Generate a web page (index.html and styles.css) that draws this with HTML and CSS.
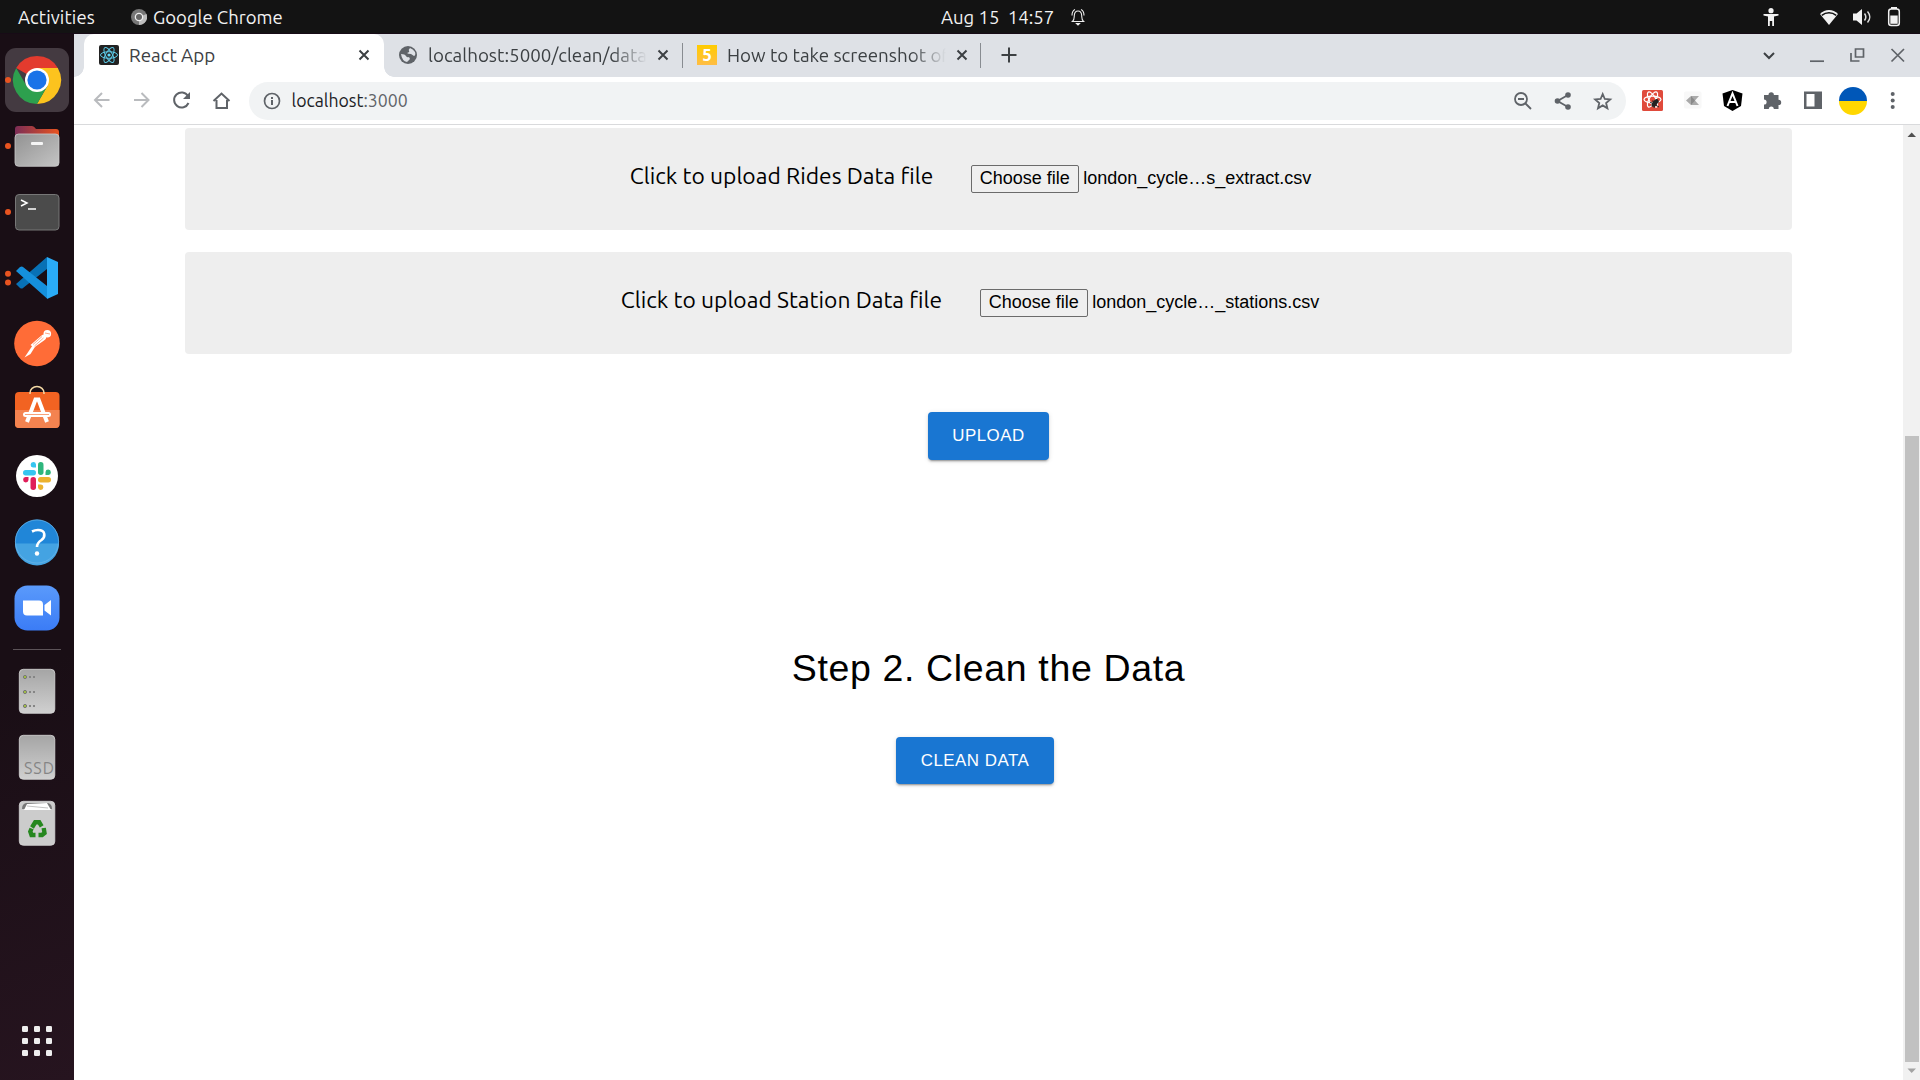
FILE: index.html
```html
<!DOCTYPE html>
<html lang="en">
<head>
<meta charset="utf-8">
<title>React App</title>
<link rel="stylesheet" href="styles.css">
</head>
<body>
<header class="topbar">
  <div class="topbar-left">
    <span class="activities">Activities</span>
    <svg class="app-icon" width="16" height="16" viewBox="0 0 16 16"><circle cx="8" cy="8" r="8" fill="#777"/><path d="M8 8 15.5 5A8 8 0 0 1 8 16Z" fill="#bdbdbd"/><circle cx="8" cy="8" r="4.3" fill="#eee"/><circle cx="8" cy="8" r="3" fill="#666"/></svg>
    <span class="app-name">Google Chrome</span>
  </div>
  <div class="clock"><span class="time">Aug 15&nbsp; 14:57</span>
    <svg width="16" height="18" viewBox="0 0 16 18" fill="none" stroke="#eee" stroke-width="1.1"><path d="M2.500 13.500C4.500 12 4.100 9.500 4.300 7.500 4.500 4.500 6 3 8 3s3.500 1.500 3.700 4.500c.2 2-.2 4.500 1.800 6ZM2 7.500C2 4.500 3 2.500 5 1.500M14 7.500C14 4.500 13 2.500 11 1.500"/><path d="M6.500 15.500h3l-1.500 1.500Z" fill="#eee"/></svg>
  </div>
  <div class="status">
    <svg width="16" height="18" viewBox="0 0 16 18" fill="#f2f2f2"><circle cx="8" cy="2.700" r="2.600"/><path d="M.5 6h15v1.600L11 8.500V18H9.200v-5H6.800v5H5V8.500L.5 7.600Z"/></svg>
    <svg class="wifi" width="20" height="17" viewBox="0 0 20 17"><path d="M10 16 1 5C6-.2 14-.2 19 5Z" fill="#f2f2f2"/><path d="M2.800 6.300c4.300-3.500 10.100-3.500 14.400 0" fill="none" stroke="#131313" stroke-width="1.500"/></svg>
    <svg class="volume" width="18" height="18" viewBox="0 0 18 18"><path d="M0 5.500h3.500L9 1v16l-5.500-4.500H0Z" fill="#f2f2f2"/><path d="M11.500 5.500c1.500 2 1.500 5 0 7M14.500 3.500c3 3.300 3 7.700 0 11" fill="none" stroke="#ddd" stroke-width="1.500"/></svg>
    <svg class="battery" width="14" height="20" viewBox="0 0 14 20"><path d="M4 0h6v2H4Z" fill="#f2f2f2"/><rect x="1.700" y="2" width="10.600" height="16.500" rx="2.500" fill="none" stroke="#f2f2f2" stroke-width="1.500"/><path d="M3.300 8.500h7.400v8.300H3.300Z" fill="#f2f2f2"/></svg>
  </div>
</header>
<div class="desktop">
<nav class="dock">
  <svg class="slot" viewBox="0 47 74 66"><rect x="5" y="48" width="64" height="64" rx="11" fill="#443a41"/><circle cx="8" cy="80" r="3" fill="#e95420"/><path d="M37 80 16.200 68A24 24 0 0 1 57.800 68Z" fill="#e33b2e"/><path d="M37 68H57.800A24 24 0 0 1 37 104L47.400 86Z" fill="#fcc31e"/><path d="M26.600 86 16.200 68A24 24 0 0 0 37 104L47.400 86 37 80Z" fill="#2da04e"/><circle cx="37" cy="80" r="12" fill="#fff"/><circle cx="37" cy="80" r="9.600" fill="#1a73e8"/></svg>
  <svg class="slot" viewBox="0 113 74 66"><defs><linearGradient id="folder"><stop stop-color="#7b2d56"/><stop offset="1" stop-color="#e95420"/></linearGradient><linearGradient id="steel" x2="1" y2="1"><stop stop-color="#929292"/><stop offset="1" stop-color="#c4c4c4"/></linearGradient></defs><circle cx="8" cy="146" r="3" fill="#e95420"/><path d="M15 129q0-3 3-3h14q2 0 4 3h20q3 0 3 3v12H15Z" fill="url(#folder)"/><rect x="15" y="134" width="44" height="32.300" rx="3.500" fill="url(#steel)" stroke="#ccc" stroke-width=".8"/><rect x="31" y="142" width="12" height="3" rx="1" fill="#f5f5f5"/></svg>
  <svg class="slot" viewBox="0 179 74 66"><circle cx="8" cy="212" r="3" fill="#e95420"/><rect x="15.500" y="194.500" width="43.500" height="35.500" rx="3.500" fill="#4b4b4b" stroke="#777"/><path d="m21 200 6 3-6 3M28 209h8" fill="none" stroke="#fff" stroke-width="1.500"/></svg>
  <svg class="slot" viewBox="0 245 74 66"><circle cx="8" cy="273.700" r="3" fill="#e95420"/><circle cx="8" cy="282.500" r="3" fill="#e95420"/><path d="m16 284 4 4q2 1 3 0L47 269V257Z" fill="#0871b5"/><path d="m16 271 4-4q2-1 3 0l24 19v12.500Z" fill="#1590dc"/><path d="m47 257 11 5v32l-11 5Z" fill="#2aabf6"/></svg>
  <svg class="slot" viewBox="0 311 74 66"><circle cx="37" cy="343.500" r="22.800" fill="#ff6c37"/><circle cx="47.300" cy="333.700" r="3.800" fill="#fff"/><path d="m30.500 345 11-9.500q3-2 4.500.5 1 2.500-2 4.500L34 347.500Z" fill="#fff"/><path d="m35.500 346-5 8-6 3.500 4-6 4-6Z" fill="#fff"/><path d="m33 344.500 9-8M34.500 346l9-8M45 333l5 1" stroke="#ff6c37" stroke-width=".6"/></svg>
  <svg class="slot" viewBox="0 377 74 66"><rect x="15" y="392" width="44.500" height="36" rx="4" fill="#f26322"/><path d="M15 410h44.500v14q0 4-4 4H19q-4 0-4-4Z" fill="#f48350"/><path d="M30 394v-1a7 6.500 0 0 1 14 0v1" fill="none" stroke="#f4d9a5" stroke-width="1.500"/><path d="M27 422 35.500 399.500h3L47 422" fill="none" stroke="#fff" stroke-width="4"/><rect x="23" y="412" width="28" height="5" rx="2.500" fill="#fff"/><path d="M25 414.500h24" stroke="#f26322" stroke-width=".6"/></svg>
  <svg class="slot" viewBox="0 443 74 66"><circle cx="37" cy="476" r="21" fill="#fff"/><g fill="#36c5f0"><rect x="23" y="470" width="13" height="5.500" rx="2.700"/><path d="M36 467.500h-3a2.700 2.700 0 1 1 3-3Z"/></g><g fill="#2eb67d"><rect x="38" y="462" width="5.500" height="13" rx="2.700"/><path d="M45.500 475v-3a2.700 2.700 0 1 1 3 3Z"/></g><g fill="#ecb22e"><rect x="38" y="477" width="13" height="5.500" rx="2.700"/><path d="M38 484.500h3a2.700 2.700 0 1 1-3 3Z"/></g><g fill="#e01e5a"><rect x="30.500" y="477" width="5.500" height="13" rx="2.700"/><path d="M28.500 477v3a2.700 2.700 0 1 1-3-3Z"/></g></svg>
  <svg class="slot" viewBox="0 509.500 74 66"><circle cx="37" cy="542" r="22" fill="#2086d8"/><path d="M15 544h44a22 22 0 0 1-44 0Z" fill="#44a3e2"/><circle cx="37" cy="542" r="21.600" fill="none" stroke="#6db6e8" stroke-width=".7"/><path d="M32 532q3-1.500 6-1.500c8 0 7.500 7 3.500 10-3 2-4.500 3.500-4.500 7" fill="none" stroke="#fff" stroke-width="2.600"/><circle cx="37" cy="554" r="2.200" fill="#fff"/></svg>
  <svg class="slot" viewBox="0 575 74 66"><defs><linearGradient id="meet" x2="0" y2="1"><stop stop-color="#5a9afb"/><stop offset="1" stop-color="#3b7cf6"/></linearGradient></defs><rect x="14.500" y="585.500" width="45" height="45" rx="13" fill="url(#meet)"/><path d="M23 600.500h16q4 0 4 4v11H27q-4 0-4-4ZM44.500 605l6.500-5v15.500l-6.500-5Z" fill="#fff"/></svg>
  <hr class="dock-line">
  <svg class="slot" viewBox="0 658 74 66"><defs><linearGradient id="drive" x2="0" y2="1"><stop stop-color="#a5a5a5"/><stop offset="1" stop-color="#d0d0d0"/></linearGradient></defs><rect x="19.300" y="669.300" width="35.500" height="44" rx="4" fill="url(#drive)" stroke="#d8d8d8" stroke-width=".8"/><g fill="#a6c63f" stroke="#777" stroke-width="1"><circle cx="25" cy="677" r="1.600"/><circle cx="25" cy="692" r="1.600"/><circle cx="25" cy="706" r="1.600"/></g><path d="M29 677h2m2 0h2M29 692h2m2 0h2M29 706h2m2 0h2" stroke="#858585" stroke-width="2"/></svg>
  <svg class="slot" viewBox="0 724 74 66"><rect x="19.300" y="735.300" width="35.500" height="44" rx="4" fill="url(#drive)" stroke="#d8d8d8" stroke-width=".8"/><text class="ssd" x="24" y="774" textLength="30">SSD</text></svg>
  <svg class="slot" viewBox="0 790 74 66"><rect x="19.300" y="801.300" width="35.500" height="44" rx="4" fill="#ccc" stroke="#d8d8d8" stroke-width=".8"/><path d="M22 809q0-5 4-6h22q4 1 4 6Z" fill="#777"/><path d="m24 810 3-6 20-1 4 7Z" fill="#fff"/><path d="m27 806 21 2" stroke="#999" stroke-width=".6"/><g fill="none" stroke="#26871f" stroke-width="4.400"><path d="m32 827.500 3.200-5.200h4l2.500 4"/><path d="m43.700 828 .8 5-2.500 2H38.500"/><path d="M35.500 835H31.500l-1.200-3.500 1.300-3"/></g></svg>
  <svg class="slot apps" viewBox="0 1008 74 66" fill="#eee"><g id="sq"><rect x="22" y="1026" width="6" height="6" rx="1.300"/><rect x="34" y="1026" width="6" height="6" rx="1.300"/><rect x="46" y="1026" width="6" height="6" rx="1.300"/></g><use href="#sq" y="12"/><use href="#sq" y="24"/></svg>
</nav>
<section class="browser">
  <div class="tabstrip">
    <div class="tab active">
      <svg class="favicon" width="20" height="20" viewBox="0 0 20 20"><rect width="20" height="20" rx="2" fill="#222"/><g fill="none" stroke="#5ccbe8" stroke-width="1"><ellipse cx="10" cy="10" rx="8.500" ry="3.300"/><ellipse cx="10" cy="10" rx="8.500" ry="3.300" transform="rotate(60 10 10)"/><ellipse cx="10" cy="10" rx="8.500" ry="3.300" transform="rotate(120 10 10)"/></g><circle cx="10" cy="10" r="1.600" fill="#61dafb"/></svg>
      <span class="tab-title">React App</span>
      <svg class="close" width="12" height="12" viewBox="0 0 12 12"><path d="m1.500 1.500 9 9m0-9-9 9" stroke="#3c4043" stroke-width="2"/></svg>
    </div>
    <div class="tab second">
      <svg class="favicon" width="20" height="20" viewBox="0 0 20 20"><circle cx="10" cy="10" r="9" fill="#5f6368"/><path d="M3 9q4 0 5 2t3 1l1 2-3 3Q4 16 3 9ZM12 3q-2 2-1 3t-2 2q1 1 4 1l3 2q2-1 1-4-2-3-5-4Z" fill="#dee1e6"/></svg>
      <span class="tab-title fade">localhost:5000/clean/data</span>
      <svg class="close" width="12" height="12" viewBox="0 0 12 12"><path d="m1.500 1.500 9 9m0-9-9 9" stroke="#3c4043" stroke-width="2"/></svg>
    </div>
    <div class="tab third">
      <span class="favicon five">5</span>
      <span class="tab-title fade">How to take screenshot of</span>
      <svg class="close" width="12" height="12" viewBox="0 0 12 12"><path d="m1.500 1.500 9 9m0-9-9 9" stroke="#3c4043" stroke-width="2"/></svg>
    </div>
    <svg class="plus" width="16" height="16" viewBox="0 0 16 16"><path d="M8 .5v15M.5 8h15" stroke="#3c4043" stroke-width="2"/></svg>
    <svg class="window-controls" width="142" height="16" viewBox="0 0 142 16" fill="none" stroke="#5f6368" stroke-width="1.700"><path d="m1 6 5 5 5-5" stroke="#3c4043" stroke-width="2"/><path d="M47 14.200h14"/><path d="M92.500 2h8v8h-8ZM88 6v8h8.500"/><path d="m128.500 2 12.500 12.500m0-12.500-12.500 12.500"/></svg>
  </div>
  <div class="toolbar">
    <svg class="nav-icons" width="144" height="24" viewBox="88 88 144 24" fill="none" stroke="#5f6368" stroke-width="2"><path d="M109.500 100H95m7-7-7 7 7 7M134 100h14.500m-7-7 7 7-7 7" stroke="#b9bbbe"/><path d="M188 96a7.500 7.500 0 1 0 .5 7"/><path d="M190 92v7h-7Z" fill="#5f6368" stroke="none"/><path d="M213.500 101 221.500 93.500 229.500 101M216.500 100v8h10.500v-8"/></svg>
    <div class="omnibox">
      <svg width="18" height="18" viewBox="0 0 18 18"><circle cx="9" cy="9" r="7.500" fill="none" stroke="#5f6368" stroke-width="1.700"/><path d="M9 8v5M9 5v2" stroke="#5f6368" stroke-width="2"/></svg>
      <span class="url"><span class="host">localhost</span>:3000</span>
      <svg class="omni-actions" width="100" height="20" viewBox="1513 90.500 100 20" fill="none" stroke="#5f6368" stroke-width="1.800"><circle cx="1521" cy="98.500" r="6"/><path d="M1518 98.500h6M1525.500 103l5.500 5.500"/><path d="m1568 94.500-10.500 6 10.500 6"/><g fill="#5f6368" stroke="none"><circle cx="1568" cy="94.500" r="2.800"/><circle cx="1557.500" cy="100.500" r="2.800"/><circle cx="1568" cy="106.500" r="2.800"/></g><path d="m1602.700 93.500 2.100 5 5.400.4-4.100 3.600 1.300 5.300-4.700-2.900-4.700 2.900 1.300-5.300-4.100-3.600 5.400-.4Z"/></svg>
    </div>
    <svg class="extensions" width="264" height="32" viewBox="1640 85 264 32"><rect x="1642" y="90" width="21" height="21" rx="1.500" fill="#e04a3b"/><g fill="none" stroke="#fff" stroke-width="1.200"><ellipse cx="1652.500" cy="99.500" rx="8.500" ry="3.300"/><ellipse cx="1652.500" cy="99.500" rx="8.500" ry="3.300" transform="rotate(60 1652.500 99.500)"/><ellipse cx="1652.500" cy="99.500" rx="8.500" ry="3.300" transform="rotate(120 1652.500 99.500)"/></g><ellipse cx="1655" cy="103" rx="2.300" ry="4.500" transform="rotate(40 1655 103)" fill="#222"/><path d="m1650 102 9 5m-2-8-3 9m-2-7 7 1" stroke="#222"/>
    <rect x="1684" y="91.500" width="17.500" height="17" rx="1.500" fill="#f8f8f8"/><path d="m1686 100.500 5-4.500h8l-4 4.500 4 4.500h-8Z" fill="#aaa"/><path d="M1691 96v9l4-4.500Z" fill="#8a8a8a"/>
    <path d="m1732.500 90 10 3.500-1.500 12.500-8.500 5-8.500-5-1.500-12.500Z" fill="#000"/><path d="m1727.500 106 5-12.500 5 12.500M1729.500 102h6" fill="none" stroke="#fff" stroke-width="2"/>
    <path d="M1764 95h4.500a2.700 2.700 0 1 1 5.400 0h4.600v4.700a2.700 2.700 0 1 1 0 5.400v4h-4.700a2.500 2.500 0 0 0-5 0H1764v-4.500a2.600 2.600 0 0 0 0-5.200Z" fill="#5f6368"/>
    <path d="M1804 91.500h18V109h-18Zm2.500 2.500v12.500h8V94Z" fill="#5f6368" fill-rule="evenodd"/>
    <path d="M1839 101a14 14 0 0 1 28 0Z" fill="#0057b8"/><path d="M1839 101a14 14 0 0 0 28 0Z" fill="#ffd700"/>
    <g fill="#5f6368"><circle cx="1892.700" cy="94" r="2"/><circle cx="1892.700" cy="100.500" r="2"/><circle cx="1892.700" cy="107" r="2"/></g></svg>
  </div>
  <div class="viewport">
    <main class="page">
      <div class="card"><span class="label rides">Click to upload Rides Data file</span><button class="choose">Choose file</button><span class="filename">london_cycle…s_extract.csv</span></div>
      <div class="card"><span class="label station">Click to upload Station Data file</span><button class="choose">Choose file</button><span class="filename">london_cycle…_stations.csv</span></div>
      <button class="primary upload">UPLOAD</button>
      <h1>Step 2. Clean the Data</h1>
      <button class="primary clean">CLEAN DATA</button>
    </main>
    <div class="scrollbar">
      <svg width="17" height="17" viewBox="0 0 17 17"><path d="M4.500 12h8.500L8.700 7.500Z" fill="#505050"/></svg>
      <div class="thumb"></div>
      <svg width="17" height="17" viewBox="0 0 17 17"><path d="M4.500 5.500h8.500L8.700 10Z" fill="#a3a3a3"/></svg>
    </div>
  </div>
</section>
</div>
</body>
</html>
```
FILE: styles.css
```css
* { box-sizing: border-box; }
body { margin: 0; width: 1920px; height: 1080px; overflow: hidden; background: #fff; font-family: Ubuntu, "Noto Sans", sans-serif; display: flex; flex-direction: column; }
svg { display: block; flex: none; }
button { margin: 0; font-family: "Liberation Sans", Arial, sans-serif; white-space: nowrap; }

.topbar { height: 34px; flex: none; background: #131313; color: #f2f2f2; display: grid; grid-template-columns: 941px 1fr auto; align-items: center; font-size: 18.5px; line-height: 34px; white-space: nowrap; border-bottom: 1px solid #170b16; }
.topbar-left, .clock, .status { display: flex; align-items: center; }
.topbar-left { padding-left: 18px; }
.activities { width: 113px; letter-spacing: .1px; }
.app-name { margin-left: 6px; }
.time { width: 129px; }
.status { padding-right: 19px; }
.wifi { margin-left: 40px; }
.volume { margin-left: 14px; }
.battery { margin-left: 16px; }

.desktop { flex: 1; min-height: 0; display: grid; grid-template-columns: 74px 1fr; }
.dock { background: linear-gradient(160deg, #190e15 60%, #26141f); display: flex; flex-direction: column; padding: 13px 0 6px; }
.slot { width: 74px; height: 66px; }
.dock-line { width: 48px; height: 1px; border: 0; background: #5c5358; margin: 8px 13px; }
.apps { margin-top: auto; }
.ssd { font: 16px Ubuntu, "Noto Sans", sans-serif; fill: #858585; }

.browser { min-width: 0; display: flex; flex-direction: column; }
.tabstrip { height: 43px; background: #dee1e6; display: flex; align-items: center; padding-left: 10px; color: #3c4043; }
.tab { height: 43px; display: flex; align-items: center; font-size: 18.8px; white-space: nowrap; }
.active { width: 300px; background: #fff; border-radius: 10px 10px 0 0; padding: 0 14px 0 15px; position: relative; }
.active::before, .active::after { content: ""; position: absolute; bottom: 0; width: 10px; height: 10px; }
.active::before { left: -10px; background: radial-gradient(circle at 0 0, transparent 9.500px, #fff 10px); }
.active::after { right: -10px; background: radial-gradient(circle at 100% 0, transparent 9.500px, #fff 10px); }
.favicon { width: 20px; height: 20px; flex: none; margin-bottom: 1px; }
.tab-title { margin: 0 0 1px 10px; overflow: hidden; }
.tab .close { margin-bottom: 1px; }
.active .close { margin-left: auto; }
.second { width: 299px; padding-left: 14px; }
.third { width: 298px; padding-left: 14px; }
.second, .third { background: linear-gradient(#888c91, #888c91) right center / 1px 25px no-repeat; }
.fade { width: 219px; -webkit-mask-image: linear-gradient(90deg, #000 84%, transparent); mask-image: linear-gradient(90deg, #000 84%, transparent); }
.second .close, .third .close { margin-left: 9.500px; }
.five { background: linear-gradient(#fc0, #ffbd45); color: #fff; font: bold 16px/20px "Noto Sans", sans-serif; text-align: center; }
.plus { margin: 0 0 1px 20px; }
.window-controls { margin: 0 15px 1px auto; }

.toolbar { height: 48px; background: #fff; border-bottom: 1px solid #d9dadc; display: flex; align-items: center; padding-left: 14px; }
.nav-icons { margin-bottom: 1px; }
.omnibox { width: 1377px; height: 38px; margin-left: 17px; border-radius: 19px; background: #f1f3f4; display: flex; align-items: center; padding: 0 13px 0 14px; }
.url { margin-left: 10.500px; font-size: 17.7px; color: #5f6368; }
.host { color: #202124; }
.omni-actions { margin-left: auto; }
.extensions { margin-left: 14px; }

.viewport { flex: 1; min-height: 0; display: flex; }
.page { flex: 1; padding: 3px 111px 0; display: flex; flex-direction: column; align-items: center; }
.card { width: 1607px; height: 102px; margin-bottom: 22px; background: #eee; border-radius: 4px; display: flex; justify-content: center; align-items: baseline; padding-top: 35px; color: #000; white-space: nowrap; }
.label { font-size: 22.8px; line-height: 26px; }
.rides { width: 303px; }
.station { width: 321px; }
.choose { width: 108px; height: 28px; margin-left: 38px; padding: 0; border: 1px solid #6b6b6b; border-radius: 2px; background: #efefef; color: #000; font-size: 18px; }
.filename { width: 264px; margin-left: 4.500px; font: 18px "Liberation Sans", Arial, sans-serif; }
.primary { border: 0; border-radius: 4px; background: #1976d2; color: #fff; font-size: 16.9px; letter-spacing: .5px; padding: 0; box-shadow: 0 3px 1px -2px rgba(0,0,0,.2), 0 2px 2px rgba(0,0,0,.14), 0 1px 5px rgba(0,0,0,.12); }
.upload { width: 121px; height: 48px; margin-top: 36px; padding-bottom: 1px; }
h1 { margin: 187px 0 47px; font: 400 37.500px/43px "Liberation Sans", Arial, sans-serif; letter-spacing: .64px; color: #000; }
.clean { width: 158px; height: 47px; margin-right: 27px; }
.scrollbar { width: 17px; background: #f1f1f1; display: flex; flex-direction: column; }
.thumb { width: 14px; height: 626px; margin: auto 1px 1px 2px; background: #c1c1c1; }
```
